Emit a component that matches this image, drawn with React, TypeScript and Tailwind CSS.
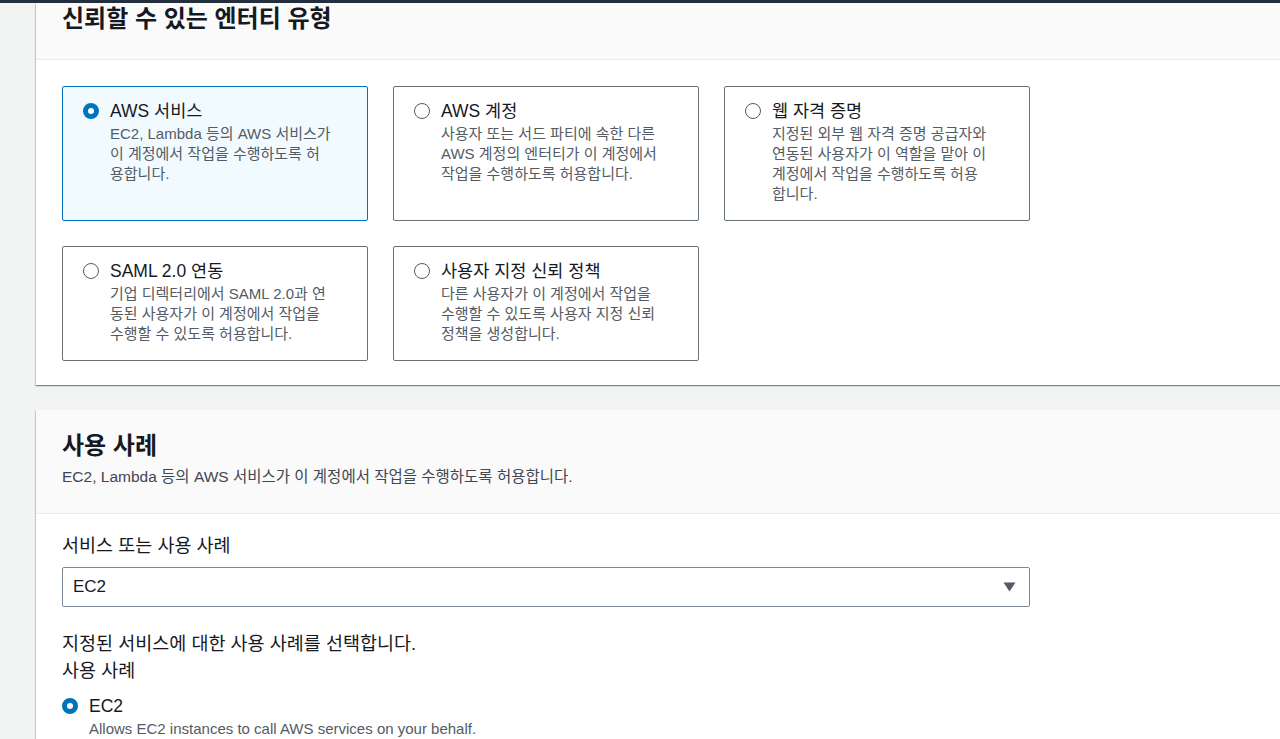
const FONT = '"Liberation Sans", "Noto Sans CJK KR", sans-serif';

interface Tile {
  title: string;
  lines: string[];
  selected?: boolean;
}

const tiles: Tile[] = [
  {
    title: "AWS 서비스",
    lines: ["EC2, Lambda 등의 AWS 서비스가", "이 계정에서 작업을 수행하도록 허", "용합니다."],
    selected: true,
  },
  {
    title: "AWS 계정",
    lines: ["사용자 또는 서드 파티에 속한 다른", "AWS 계정의 엔터티가 이 계정에서", "작업을 수행하도록 허용합니다."],
  },
  {
    title: "웹 자격 증명",
    lines: ["지정된 외부 웹 자격 증명 공급자와", "연동된 사용자가 이 역할을 맡아 이", "계정에서 작업을 수행하도록 허용", "합니다."],
  },
  {
    title: "SAML 2.0 연동",
    lines: ["기업 디렉터리에서 SAML 2.0과 연", "동된 사용자가 이 계정에서 작업을", "수행할 수 있도록 허용합니다."],
  },
  {
    title: "사용자 지정 신뢰 정책",
    lines: ["다른 사용자가 이 계정에서 작업을", "수행할 수 있도록 사용자 지정 신뢰", "정책을 생성합니다."],
  },
];

function Radio({ checked }: { checked?: boolean }) {
  if (checked) {
    return <span className="block w-4 h-4 rounded-full border-[5px] border-[#0073bb] bg-white shrink-0" />;
  }
  return <span className="block w-4 h-4 rounded-full border-[1.5px] border-[#545b64] bg-white shrink-0" />;
}

function TileCard({ tile }: { tile: Tile }) {
  return (
    <div
      className={
        tile.selected
          ? "rounded-[2px] border border-[#0073bb] bg-[#f1faff] pl-5 pr-4 pt-[13px] pb-4"
          : "rounded-[2px] border border-[#687078] bg-white pl-5 pr-4 pt-[13px] pb-4"
      }
    >
      <div className="flex items-center gap-[11px]">
        <Radio checked={tile.selected} />
        <span className="text-[17.5px] leading-[22px] text-[#16191f]">{tile.title}</span>
      </div>
      <div className="pl-[27px] mt-[2px] text-[15px] leading-[20px] text-[#545b64]">
        {tile.lines.map((l) => (
          <div key={l} className="whitespace-nowrap">
            {l}
          </div>
        ))}
      </div>
    </div>
  );
}

const cardShadow =
  "shadow-[0_1px_1px_0_rgba(0,28,36,0.3),1px_1px_1px_0_rgba(0,28,36,0.15),-1px_1px_1px_0_rgba(0,28,36,0.15)]";

export default function App() {
  return (
    <div className="min-h-[739px] bg-[#f2f3f3] overflow-hidden" style={{ fontFamily: FONT }}>
      <div className="h-[3px] bg-[#232f3e]" />
      <div className="pl-9 flex flex-col gap-[25px]">
        <section className={`bg-white w-[1260px] ${cardShadow}`}>
          <div className="bg-[#fafafa] border-b border-[#eaeded] h-[57px] pl-[26px] pt-[1px]">
            <h2 className="text-[24px] leading-[30px] font-bold text-[#16191f]">신뢰할 수 있는 엔터티 유형</h2>
          </div>
          <div className="px-[26px] pt-[26px] pb-[24px]">
            <div className="grid grid-cols-[306px_306px_306px] gap-x-[25px] gap-y-[25px]">
              {tiles.map((t) => (
                <TileCard key={t.title} tile={t} />
              ))}
            </div>
          </div>
        </section>

        <section className={`bg-white w-[1260px] ${cardShadow}`}>
          <div className="bg-[#fafafa] border-b border-[#eaeded] pl-[26px] pt-5 pb-[26px]">
            <h2 className="text-[24px] leading-[32px] font-bold text-[#16191f]">사용 사례</h2>
            <p className="text-[15.5px] leading-[20px] text-[#414750] mt-[5px]">
              EC2, Lambda 등의 AWS 서비스가 이 계정에서 작업을 수행하도록 허용합니다.
            </p>
          </div>
          <div className="px-[26px] pt-[19px] pb-6">
            <label className="block text-[18.5px] leading-[26px] text-[#16191f]">서비스 또는 사용 사례</label>
            <div className="mt-[8px] w-[968px] h-[40px] rounded-[2px] border border-[#7d8998] flex items-center justify-between pl-[10px] pr-[13px]">
              <span className="text-[17px] text-[#16191f]">EC2</span>
              <svg width="13" height="10" viewBox="0 0 13 10">
                <path d="M0.5 0.5 H12.5 L6.5 9.5 Z" fill="#545b64" />
              </svg>
            </div>
            <p className="mt-[23px] text-[18.5px] leading-[27px] text-[#16191f]">지정된 서비스에 대한 사용 사례를 선택합니다.</p>
            <p className="text-[18.5px] leading-[27px] text-[#16191f]">사용 사례</p>
            <div className="mt-[11px] flex items-center gap-[11px]">
              <Radio checked />
              <span className="text-[17.5px] leading-[22px] text-[#16191f]">EC2</span>
            </div>
            <p className="pl-[27px] mt-[2px] text-[15px] leading-[20px] text-[#545b64]">
              Allows EC2 instances to call AWS services on your behalf.
            </p>
          </div>
        </section>
      </div>
    </div>
  );
}
